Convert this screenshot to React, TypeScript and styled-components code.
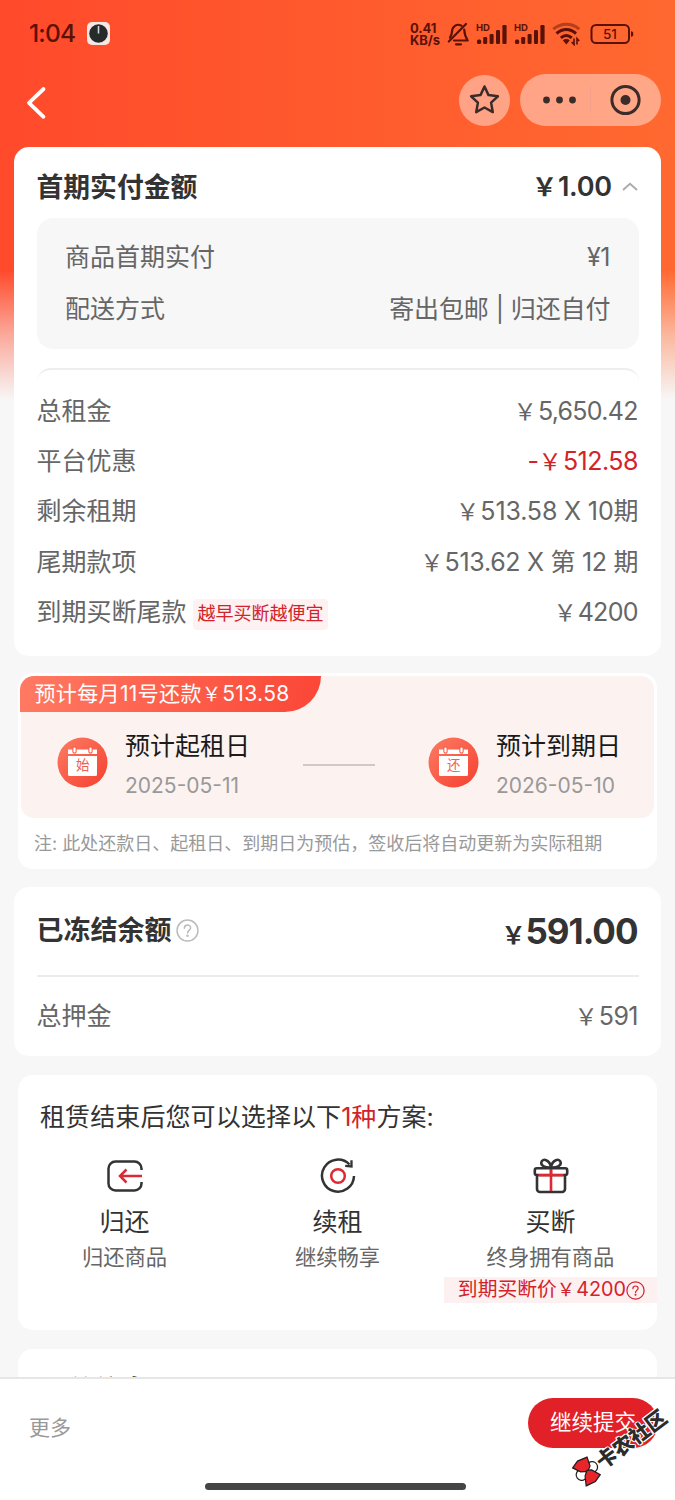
import React from "react";
import styled, { createGlobalStyle } from "styled-components";

const GlobalStyle = createGlobalStyle`
  * { box-sizing: border-box; }
  body { margin: 0; background: #f7f7f7; }
`;

const Screen = styled.div`
  position: relative;
  width: 675px;
  height: 1500px;
  overflow: hidden;
  display: flex;
  flex-direction: column;
  font-family: Inter, "Noto Sans CJK SC", sans-serif;
  color: #333;
  background:
    linear-gradient(to bottom, rgba(247, 247, 247, 0) 270px, rgba(247, 247, 247, 0.55) 335px, #f7f7f7 400px),
    linear-gradient(to right, #ff4a2b 0, #ff572d 40%, #ff6930 100%);
`;

const Text = styled.span<{ $size?: number; $color?: string; $weight?: number; $track?: number }>`
  font-size: ${(p) => p.$size ?? 25}px;
  color: ${(p) => p.$color ?? "#666"};
  font-weight: ${(p) => p.$weight ?? 400};
  letter-spacing: ${(p) => p.$track ?? 0}px;
  margin-right: ${(p) => -(p.$track ?? 0)}px;
  line-height: 1.2;
  white-space: nowrap;
`;

const Yen = styled.span`
  font-size: 0.93em;
  letter-spacing: 1px;
`;

const Money = ({ children }: { children: string }) => {
  const [before, after] = children.split("￥");
  return <>{before}<Yen>￥</Yen>{after}</>;
};

const StatusBar = styled.div`
  flex: none;
  height: 68px;
  padding: 0 41px 0 29px;
  display: flex;
  align-items: center;
  justify-content: space-between;
  color: #5a1108;
`;

const StatusGroup = styled.div<{ $gap: number }>`
  display: flex;
  align-items: center;
  gap: ${(p) => p.$gap}px;
`;

const NetSpeed = styled.div`
  width: 31px;
  display: flex;
  flex-direction: column;
  font-size: 13px;
  font-weight: 700;
  line-height: 12px;
  letter-spacing: -0.1px;
  white-space: nowrap;
`;

const BatterySlot = styled.div`
  margin-left: 3px;
  line-height: 0;
`;

const NavBar = styled.div`
  flex: none;
  height: 79px;
  padding: 6px 14px 0 26px;
  display: flex;
  align-items: flex-start;
  justify-content: space-between;
`;

const BackButton = styled.div`
  padding-top: 12px;
  line-height: 0;
`;

const NavActions = styled.div`
  display: flex;
  align-items: center;
  gap: 10px;
`;

const Capsule = styled.div<{ $width: number; $height: number }>`
  width: ${(p) => p.$width}px;
  height: ${(p) => p.$height}px;
  border-radius: 26px;
  background: rgba(255, 255, 255, 0.42);
  display: flex;
  align-items: center;
  justify-content: center;
`;

const Content = styled.main`
  flex: 1;
  min-height: 0;
  overflow: hidden;
  display: flex;
  flex-direction: column;
`;

const Card = styled.section<{ $height: number; $side: number; $top?: number; $pad?: string }>`
  flex: none;
  height: ${(p) => p.$height}px;
  margin: ${(p) => p.$top ?? 0}px ${(p) => p.$side}px 0;
  padding: ${(p) => p.$pad ?? "0"};
  border-radius: 15px;
  background: #fff;
`;

const Row = styled.div<{ $height: number; $pad?: string }>`
  height: ${(p) => p.$height}px;
  padding: ${(p) => p.$pad ?? "0"};
  display: flex;
  align-items: center;
  justify-content: space-between;
`;

const RowSide = styled.div<{ $gap?: number }>`
  display: flex;
  align-items: center;
  gap: ${(p) => p.$gap ?? 0}px;
`;

const GreyBox = styled.div`
  height: 131px;
  margin-bottom: 19px;
  padding: 13px 28px 0 28.5px;
  border-radius: 16px;
  background: #f7f7f7;
`;

const RoundedRule = styled.div`
  height: 17.4px;
  border-top: 2px solid #eee;
  border-radius: 14px 14px 0 0;
`;

const Rule = styled.div`
  height: 2px;
  background: #ececec;
`;

const Hint = styled.span`
  height: 31px;
  margin: 4px 0 0 6px;
  padding: 0 4px 0 5px;
  display: flex;
  align-items: center;
  border-radius: 4px;
  background: #fdf1f1;
`;

const PinkPanel = styled.div`
  height: 142px;
  border-radius: 13px;
  background: #fcf2f0;
`;

const Banner = styled.div`
  width: 301px;
  height: 36px;
  margin: -1px 0 0 -1px;
  padding-left: 14.5px;
  display: flex;
  align-items: center;
  border-radius: 14px 0 36px 0;
  background: linear-gradient(100deg, #ff7a63, #fb4636);
`;

const Schedule = styled.div`
  height: 101px;
  padding: 0 33px 0 36px;
  display: flex;
  align-items: center;
  justify-content: space-between;
`;

const DateItem = styled.div`
  display: flex;
  align-items: center;
  gap: 17px;
`;

const DateText = styled.div`
  display: flex;
  flex-direction: column;
  align-items: flex-start;
  gap: 12px;
  padding-top: 5px;
`;

const Connector = styled.div`
  width: 72px;
  height: 2px;
  margin-top: 5px;
  background: #d2c8c7;
`;

const PlanTitle = styled.div`
  height: 31px;
  padding-left: 22px;
  display: flex;
  align-items: center;
`;

const Options = styled.div`
  display: grid;
  grid-template-columns: repeat(3, 213px);
  padding-top: 15px;
`;

const Option = styled.div`
  display: flex;
  flex-direction: column;
  align-items: center;
`;

const OptionLabel = styled.div<{ $height: number }>`
  height: ${(p) => p.$height}px;
  display: flex;
  align-items: center;
`;

const PriceTag = styled.div`
  width: 213px;
  height: 26px;
  margin-top: 2px;
  padding-right: 12px;
  display: flex;
  align-items: center;
  justify-content: flex-end;
  background: #fdf0f0;
`;

const Footer = styled.footer`
  flex: none;
  height: 123px;
  padding: 19px 17px 0 29px;
  border-top: 2px solid #e6e6e6;
  background: #fff;
  display: flex;
  flex-direction: column;
`;

const FooterRow = styled.div`
  height: 50px;
  display: flex;
  justify-content: space-between;
`;

const MoreLink = styled.div`
  padding-top: 16.5px;
  line-height: 1;
`;

const Submit = styled.div`
  width: 130px;
  height: 50px;
  border-radius: 25px;
  background: #e12127;
  display: flex;
  align-items: center;
  justify-content: center;
`;

const HomeIndicator = styled.div`
  width: 261px;
  height: 7px;
  margin: 35px 0 0 176px;
  border-radius: 3.5px;
  background: #454545;
`;

const Watermark = styled.div`
  position: absolute;
  left: 565px;
  top: 1430px;
  width: 110px;
  height: 32px;
  display: flex;
  align-items: center;
  transform: rotate(-37deg);
`;

const WatermarkText = styled.span`
  font-family: "Noto Sans CJK SC", sans-serif;
  font-size: 20.5px;
  line-height: 26px;
  font-weight: 900;
  color: #2b2b2b;
  white-space: nowrap;
  text-shadow: 1px 0 #fff, -1px 0 #fff, 0 1px #fff, 0 -1px #fff, 1px 1px #fff, -1px -1px #fff;
`;

const SignalIcon = () => (
  <svg width="32" height="24" viewBox="0 0 32 24" fill="currentColor" overflow="visible">
    <text x="0" y="8.500" fontSize="9.500" fontWeight="700" fontFamily="Inter">HD</text>
    <rect x="1" y="17.500" width="4.200" height="4.500" rx="1.500" />
    <rect x="7.200" y="15" width="4" height="7" rx="1.200" />
    <rect x="13.600" y="12" width="4" height="10" rx="1.200" />
    <rect x="20" y="8" width="4" height="14" rx="1.200" />
    <rect x="26.400" y="3" width="4.200" height="19" rx="1.200" />
  </svg>
);

const MuteIcon = () => (
  <svg width="23" height="24" viewBox="0 0 23 24" fill="none" stroke="currentColor" strokeWidth="2.200" strokeLinecap="round" strokeLinejoin="round">
    <path d="M14.500 3.700C9.500 1 5.200 4.700 5 9.500c-.1 3-.6 4-2 6.200M17.200 7.500c.3 5 .8 7 3.500 11H7" />
    <path d="M19 2 1.800 19.500" />
    <path d="M9 22.300h5" />
  </svg>
);

const WifiIcon = () => (
  <svg width="29" height="24" viewBox="0 0 29 24" fill="none" stroke="currentColor" strokeWidth="3">
    <path d="M1.200 7.200c8-6.500 18.600-6.500 26 0" opacity=".45" />
    <path d="M4.500 11.500c6-5.200 13.500-5.200 19.500 0" />
    <path d="M8.800 15.800c3.600-3 7.400-3 11 0" />
    <path d="m10.800 18.200 3.500 4.200 3.500-4.200c-2.200-1.600-4.800-1.600-7 0z" fill="currentColor" stroke="none" />
    <path d="M22 16.500v6l-2.300-2.500M25 22.500v-6l2.200 2.500" strokeWidth="1.600" />
  </svg>
);

const BatteryIcon = () => (
  <svg width="44" height="20" viewBox="0 0 44 20">
    <rect x="1.500" y="1" width="37.500" height="18" rx="4.500" fill="none" stroke="currentColor" strokeWidth="2" />
    <path d="M41 7.200c1.800 0 2.300 1 2.300 2.800s-.5 2.800-2.300 2.800z" fill="currentColor" />
    <text x="20" y="14.800" textAnchor="middle" fontSize="13.500" fontWeight="500" fontFamily="Inter" fill="currentColor">51</text>
  </svg>
);

const ClockIcon = () => (
  <svg width="23" height="23" viewBox="0 0 23 23">
    <rect width="23" height="23" rx="5" fill="#f6e6e4" />
    <circle cx="11.500" cy="11.500" r="9.300" fill="#252a2a" />
    <path d="M11.500 4v7.500" stroke="#cfd5d3" strokeWidth="1.600" />
  </svg>
);

const BackIcon = () => (
  <svg width="22" height="34" viewBox="0 0 22 34" fill="none" stroke="#fff" strokeWidth="3.800" strokeLinecap="round" strokeLinejoin="round">
    <path d="M17.500 3 3 16.800l14.500 14" />
  </svg>
);

const StarIcon = () => (
  <svg width="32" height="32" viewBox="0 0 32 32" fill="none" stroke="#3b2c29" strokeWidth="2.500" strokeLinejoin="round">
    <path d="m15.500 2.500 4 8.600 9.400 1.200-6.800 6.400 1.700 9.400-8.300-4.600-8.300 4.600 1.700-9.400-6.800-6.400 9.400-1.200z" />
  </svg>
);

const MenuIcon = () => (
  <svg width="141" height="52" viewBox="0 0 141 52" fill="#3b2c29">
    <circle cx="26.500" cy="26" r="3.400" />
    <circle cx="39.500" cy="26" r="3.400" />
    <circle cx="52.500" cy="26" r="3.400" />
    <path d="M70.500 12v28" stroke="#f5a08a" strokeWidth="1" />
    <circle cx="105.500" cy="26" r="13.600" fill="none" stroke="#3b2c29" strokeWidth="3" />
    <circle cx="105.500" cy="26" r="5" />
  </svg>
);

const CollapseIcon = () => (
  <svg width="16" height="10" viewBox="0 0 16 10" fill="none" stroke="#aaa" strokeWidth="1.800">
    <path d="M1 8 8 1.800 15 8" />
  </svg>
);

const HelpIcon = ({ size, color }: { size: number; color: string }) => (
  <svg width={size} height={size} viewBox="0 0 22 22" fill="none" stroke={color} strokeWidth="1.400" strokeLinecap="round">
    <circle cx="11" cy="11" r="10" />
    <path d="M8 8.800c0-4 6-3.900 6-.4 0 2.300-3 2.600-3 5" />
    <circle cx="11" cy="16" r=".5" fill={color} />
  </svg>
);

const CalendarIcon = ({ label, id }: { label: string; id: string }) => (
  <svg width="51" height="51" viewBox="0 0 51 51">
    <defs>
      <linearGradient id={id} x1="0" y1="0" x2="1" y2="1">
        <stop offset="0" stopColor="#fc7c64" />
        <stop offset="1" stopColor="#f5402f" />
      </linearGradient>
    </defs>
    <circle cx="25.500" cy="25.500" r="25" fill={`url(#${id})`} />
    <path d="M11 12.500h29v4.500H11zM11 19h29v18.500a1.500 1.500 0 0 1-1.500 1.500h-26a1.500 1.500 0 0 1-1.500-1.500z" fill="#fff" />
    <path d="M17.500 11.500v3M33.500 11.500v3" stroke="#f9604c" strokeWidth="4.400" strokeLinecap="round" />
    <path d="M17.500 11.500v3M33.500 11.500v3" stroke="#fff" strokeWidth="2.200" strokeLinecap="round" />
    <text x="25.700" y="33" textAnchor="middle" fontSize="13.500" fontFamily="Noto Sans CJK SC" fill="#f0604f">{label}</text>
  </svg>
);

const ReturnIcon = () => (
  <svg width="38" height="38" viewBox="0 0 38 38" fill="none" stroke="#333" strokeWidth="2.500">
    <path d="M35.500 13v-1.500a7 7 0 0 0-7-7h-19a7 7 0 0 0-7 7v15a7 7 0 0 0 7 7h19a7 7 0 0 0 7-7V25" />
    <path d="M36 19H15M20.500 12.500 14 19l6.500 6.500" stroke="#dc2a34" />
  </svg>
);

const RenewIcon = () => (
  <svg width="38" height="38" viewBox="0 0 38 38" fill="none" stroke="#333" strokeWidth="2.500">
    <path d="M30.500 7.500A16 16 0 1 0 35 19" />
    <path d="M32.500 3.200v6.300l-6.300-.6" strokeWidth="2.300" />
    <circle cx="19" cy="19" r="6.800" stroke="#dc2a34" />
  </svg>
);

const GiftIcon = () => (
  <svg width="38" height="38" viewBox="0 0 38 38" fill="none" stroke="#333" strokeWidth="2.600" strokeLinejoin="round">
    <path d="M19 10.500C13 11 8.800 8.500 9.300 5.500c1-5 8.700-2.800 9.700 5 1-7.800 8.700-10 9.700-5 .5 3-3.700 5.500-9.700 5z" />
    <path d="M5 18v14a3 3 0 0 0 3 3h22a3 3 0 0 0 3-3V18" />
    <path d="M19 11.500V34" stroke="#dc2a34" />
    <rect x="2.800" y="11.300" width="32.400" height="6.700" rx="2" />
    <path d="M19 12.500V19M6.500 18.300h25" stroke="#dc2a34" />
  </svg>
);

const WatermarkIcon = () => (
  <svg width="27" height="30" viewBox="0 0 27 30" stroke="#1d1d1d" strokeWidth="1.200">
    <circle cx="7" cy="15" r="5.500" fill="#fff" />
    <circle cx="20" cy="15" r="5.500" fill="#fff" />
    <path d="M4 4 12 1.500l10 2.500-3 9-5 3-6-4z" fill="#e8252b" />
    <path d="M4 26.500 14 28.500l8-2.500-4-9-4-2.500-5 3.500z" fill="#e8252b" />
  </svg>
);

const charges = [
  { label: "总租金", value: "￥5,650.42", track: -0.7 },
  { label: "平台优惠", value: "-￥512.58", track: -0.5, color: "#d3222a" },
  { label: "剩余租期", value: "￥513.58 X 10期", track: -0.15 },
  { label: "尾期款项", value: "￥513.62 X 第 12 期", track: -0.3 },
  { label: "到期买断尾款", value: "￥4200", track: -0.7, hint: "越早买断越便宜" },
];

export default function App() {
  return (
    <Screen>
      <GlobalStyle />
      <StatusBar>
        <StatusGroup $gap={11}>
          <Text $size={24.5} $weight={500} $color="#5a1108" $track={-0.8}>1:04</Text>
          <ClockIcon />
        </StatusGroup>
        <StatusGroup $gap={6}>
          <NetSpeed><span>0.41</span><span>KB/s</span></NetSpeed>
          <MuteIcon />
          <SignalIcon />
          <SignalIcon />
          <WifiIcon />
          <BatterySlot><BatteryIcon /></BatterySlot>
        </StatusGroup>
      </StatusBar>
      <NavBar>
        <BackButton><BackIcon /></BackButton>
        <NavActions>
          <Capsule $width={51} $height={51}><StarIcon /></Capsule>
          <Capsule $width={141} $height={52}><MenuIcon /></Capsule>
        </NavActions>
      </NavBar>
      <Content>
        <Card $height={509} $side={14} $pad="8px 22.5px 0">
          <Row $height={63} $pad="2px 1px 0 0">
            <Text $size={26.8} $weight={700} $color="#333">首期实付金额</Text>
            <RowSide $gap={9.5}>
              <Text $size={27} $weight={600} $color="#333" $track={-0.3}><Money>￥1.00</Money></Text>
              <CollapseIcon />
            </RowSide>
          </Row>
          <GreyBox>
            <Row $height={52}>
              <Text>商品首期实付</Text>
              <Text $track={-0.5}>¥1</Text>
            </Row>
            <Row $height={52}>
              <Text>配送方式</Text>
              <Text $track={-0.1}>寄出包邮 | 归还自付</Text>
            </Row>
          </GreyBox>
          <RoundedRule />
          {charges.map((c) => (
            <Row $height={50.4} key={c.label}>
              <RowSide>
                <Text>{c.label}</Text>
                {c.hint && <Hint><Text $size={18} $color="#d3222a">{c.hint}</Text></Hint>}
              </RowSide>
              <Text $track={c.track} $color={c.color}><Money>{c.value}</Money></Text>
            </Row>
          ))}
        </Card>

        <Card $height={196} $side={18} $top={17} $pad="4px 3px 0">
          <PinkPanel>
            <Banner><Text $size={21} $color="#fff" $track={0.35}><Money>预计每月11号还款￥513.58</Money></Text></Banner>
            <Schedule>
              <DateItem>
                <CalendarIcon label="始" id="startDate" />
                <DateText>
                  <Text $color="#1a1a1a">预计起租日</Text>
                  <Text $size={21} $color="#999">2025-05-11</Text>
                </DateText>
              </DateItem>
              <Connector />
              <DateItem>
                <CalendarIcon label="还" id="endDate" />
                <DateText>
                  <Text $color="#1a1a1a">预计到期日</Text>
                  <Text $size={21} $color="#999">2026-05-10</Text>
                </DateText>
              </DateItem>
            </Schedule>
          </PinkPanel>
          <Row $height={51} $pad="0 0 0 13px">
            <Text $size={18} $color="#999">注: 此处还款日、起租日、到期日为预估，签收后将自动更新为实际租期</Text>
          </Row>
        </Card>

        <Card $height={169} $side={14} $top={18} $pad="0 22.5px">
          <Row $height={88}>
            <RowSide $gap={4}>
              <Text $size={27} $weight={700} $color="#333">已冻结余额</Text>
              <HelpIcon size={23} color="#bbb" />
            </RowSide>
            <Text $size={35} $weight={700} $color="#333" $track={-1}>
              <Text $size={24} $weight={600} $color="#333">￥</Text>591.00
            </Text>
          </Row>
          <Rule />
          <Row $height={78}>
            <Text>总押金</Text>
            <Text $track={-0.6}><Money>￥591</Money></Text>
          </Row>
        </Card>

        <Card $height={255} $side={18} $top={19} $pad="26px 0 0">
          <PlanTitle>
            <Text $color="#333" $track={0.1}>租赁结束后您可以选择以下<Text $color="#d3222a">1种</Text>方案:</Text>
          </PlanTitle>
          <Options>
            <Option>
              <OptionLabel $height={57}><ReturnIcon /></OptionLabel>
              <OptionLabel $height={36}><Text $color="#333">归还</Text></OptionLabel>
              <OptionLabel $height={35}><Text $size={21.3}>归还商品</Text></OptionLabel>
            </Option>
            <Option>
              <OptionLabel $height={57}><RenewIcon /></OptionLabel>
              <OptionLabel $height={36}><Text $color="#333">续租</Text></OptionLabel>
              <OptionLabel $height={35}><Text $size={21.3}>继续畅享</Text></OptionLabel>
            </Option>
            <Option>
              <OptionLabel $height={57}><GiftIcon /></OptionLabel>
              <OptionLabel $height={36}><Text $color="#333">买断</Text></OptionLabel>
              <OptionLabel $height={35}><Text $size={21.3}>终身拥有商品</Text></OptionLabel>
              <PriceTag>
                <Text $size={19.8} $color="#d3222a"><Money>到期买断价￥4200</Money></Text>
                <HelpIcon size={19} color="#d3222a" />
              </PriceTag>
            </Option>
          </Options>
        </Card>

        <Card $height={200} $side={18} $top={19} $pad="25.5px 22px 0">
          <Text $size={27} $weight={700} $color="#333">订单信息</Text>
        </Card>
      </Content>

      <Footer>
        <FooterRow>
          <MoreLink><Text $size={21} $color="#999">更多</Text></MoreLink>
          <Submit><Text $size={21.5} $color="#fff">继续提交</Text></Submit>
        </FooterRow>
        <HomeIndicator />
      </Footer>

      <Watermark>
        <WatermarkIcon />
        <WatermarkText>卡农社区</WatermarkText>
      </Watermark>
    </Screen>
  );
}
